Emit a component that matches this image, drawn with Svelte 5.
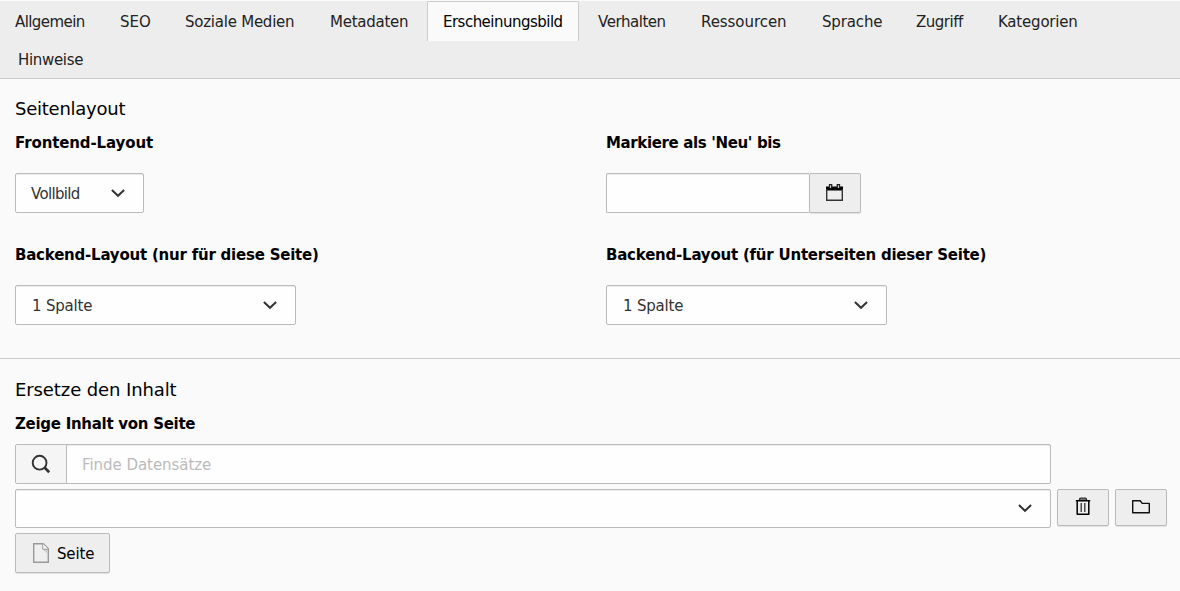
<script>
  const tabs = [
    { label: 'Allgemein', width: 105, spacing: -0.58 },
    { label: 'SEO', width: 65, spacing: 0 },
    { label: 'Soziale Medien', width: 145, spacing: -0.24 },
    { label: 'Metadaten', width: 112, spacing: -0.25 },
    { label: 'Erscheinungsbild', width: 152, spacing: -0.52, active: true },
    { label: 'Verhalten', width: 103, spacing: -0.45 },
    { label: 'Ressourcen', width: 121, spacing: -0.06 },
    { label: 'Sprache', width: 94, spacing: -0.15 },
    { label: 'Zugriff', width: 82, spacing: -0.5 },
    { label: 'Kategorien', width: 112, spacing: -0.2 },
    { label: 'Hinweise', width: 105, spacing: -0.32 }
  ];
</script>

{#snippet chevron()}
  <svg class="chevron" width="16" height="16" viewBox="0 0 16 16"><path d="M1.900 5 8 10.800 14.100 5" fill="none" stroke="#333" stroke-width="2" /></svg>
{/snippet}

<div class="page">
  <nav class="tabs">
    {#each tabs as tab}
      <a class="tab" class:active={tab.active} style="width:{tab.width}px;letter-spacing:{tab.spacing}px"><span>{tab.label}</span></a>
    {/each}
  </nav>

  <section class="layout">
    <h2>Seitenlayout</h2>
    <div class="grid">
      <div class="field">
        <span class="label wider">Frontend-Layout</span>
        <div class="select small"><span>Vollbild</span>{@render chevron()}</div>
      </div>
      <div class="field">
        <span class="label tight">Markiere als 'Neu' bis</span>
        <div class="date">
          <div class="input"></div>
          <button class="btn" aria-label="Kalender">
            <svg width="18" height="18" viewBox="0 0 18 18"><path d="M0 2.500h17v4H0z" fill="#000" /><path d="M.7 5v11.300h15.600V5" fill="none" stroke="#333" stroke-width="1.400" /><path d="M3.500 4V.7h2.200V4M11.300 4V.7h2.200V4" fill="#eee" stroke="#222" stroke-width="1.300" /></svg>
          </button>
        </div>
      </div>
      <div class="field">
        <span class="label">Backend-Layout (nur für diese Seite)</span>
        <div class="select"><span>1 Spalte</span>{@render chevron()}</div>
      </div>
      <div class="field">
        <span class="label">Backend-Layout (für Unterseiten dieser Seite)</span>
        <div class="select"><span>1 Spalte</span>{@render chevron()}</div>
      </div>
    </div>
  </section>

  <section class="content">
    <h2>Ersetze den Inhalt</h2>
    <span class="label">Zeige Inhalt von Seite</span>
    <div class="search">
      <div class="addon">
        <svg width="20" height="20" viewBox="0 0 20 20" fill="none" stroke="#333"><circle cx="8.600" cy="8.700" r="6.900" stroke-width="1.900" /><path d="m13.300 13.300 4.900 4.900" stroke-width="2.700" /></svg>
      </div>
      <div class="placeholder"><span>Finde Datensätze</span></div>
    </div>
    <div class="records">
      <div class="select wide">{@render chevron()}</div>
      <button class="btn tool" aria-label="Löschen">
        <svg width="16" height="20" viewBox="0 0 16 20" fill="none" stroke="#000"><path d="M4.500 3.500V2.200q0-1 1-1h5q1 0 1 1v1.300z" fill="#888" stroke="#333" stroke-width="1.300" /><path d="M.8 3.700h14.400" stroke-width="1.400" /><path d="M2.200 3.700v13.500h11.600V3.700" stroke-width="1.500" stroke-linejoin="round" /><path d="M6.200 6v9M9.800 6v9" stroke="#333" stroke-width="1.300" /></svg>
      </button>
      <button class="btn tool" aria-label="Ordner">
        <svg width="18" height="14" viewBox="0 0 18 14"><path d="M.7 12.700V.8h7.500l2 2.600h7.100v9.300z" fill="none" stroke="#111" stroke-width="1.400" stroke-linejoin="round" /></svg>
      </button>
    </div>
    <button class="btn page-btn">
      <svg width="16" height="20" viewBox="0 0 16 20"><path d="M.7.7h9.600l5 5v13.600H.7z" fill="#efefef" stroke="#999" stroke-width="1.400" /><path d="M9.500 6 15 11.500V6z" fill="#ccc" /><path d="M9.700.7v5.500h5.600" fill="#fafafa" stroke="#999" /></svg>
      <span>Seite</span>
    </button>
  </section>
</div>

<style>
  :global(body) { margin: 0; background: #fafafa; }
  .page { box-sizing: border-box; width: 1180px; height: 591px; overflow: hidden; font: 15px/20px "DejaVu Sans", Verdana, sans-serif; color: #000; background: #fafafa; border-top: 1px solid #fafafa; }
  .page * { box-sizing: border-box; }
  .tabs { display: flex; flex-wrap: wrap; align-content: flex-start; height: 78px; background: #ededed; border-bottom: 1px solid #ccc; }
  .tab { height: 40px; padding: 11px 0 0 15px; color: #222; white-space: nowrap; }
  .tab:nth-child(6) { margin-left: 4px; }
  .tab:last-child { margin-top: -2px; padding-left: 18px; }
  .tab.active { color: #000; background: #fafafa; border: 1px solid #ccc; border-bottom: 0; border-radius: 2px 2px 0 0; padding-top: 10px; }
  section { padding: 0 15px; }
  h2 { margin: 0; font-size: 18px; line-height: 24px; font-weight: 400; letter-spacing: -.25px; white-space: nowrap; }
  .layout { height: 280px; padding-top: 18px; border-bottom: 1px solid #ccc; }
  .grid { display: grid; grid-template-columns: 591px 1fr; grid-auto-rows: 112px; padding-top: 12px; }
  .label { display: block; font-weight: 700; letter-spacing: -.22px; white-space: nowrap; }
  .label.wider { letter-spacing: -.12px; }
  .label.tight { letter-spacing: -.36px; }
  .field .label { margin-bottom: 20px; }
  .select { display: flex; align-items: center; justify-content: space-between; width: 281px; height: 40px; padding: 0 17px 0 16px; color: #333; letter-spacing: -.2px; background: #fefefe; border: 1px solid #bbb; border-radius: 2px; box-shadow: inset 0 1px 1px rgba(0,0,0,.075); }
  .select span { padding-top: 2px; }
  .select.small { width: 129px; padding-left: 15px; letter-spacing: -.68px; }
  .chevron { flex: none; }
  .date { display: flex; width: 255px; height: 40px; }
  .input { flex: 1; background: #fefefe; border: 1px solid #bbb; border-right: 0; border-radius: 2px 0 0 2px; box-shadow: inset 0 1px 1px rgba(0,0,0,.075); }
  .btn { display: flex; align-items: center; justify-content: center; width: 52px; padding: 0; color: #000; font: inherit; background: #eee; border: 1px solid #bbb; border-radius: 2px; box-shadow: 0 1px 1px rgba(0,0,0,.1); }
  .content { padding-top: 19px; }
  .content h2 { letter-spacing: -.1px; }
  .content > .label { margin-top: 12px; letter-spacing: -.28px; }
  .search { display: flex; width: 1036px; height: 40px; margin-top: 10px; background: #fefefe; border: 1px solid #bbb; border-radius: 2px; }
  .addon { display: flex; align-items: center; justify-content: center; width: 51px; background: #f5f5f5; border-right: 1px solid #bbb; }
  .placeholder { display: flex; flex: 1; align-items: center; padding: 2px 0 0 15px; color: #bbb; letter-spacing: -.05px; box-shadow: inset 0 1px 1px rgba(0,0,0,.075); }
  .records { display: flex; gap: 6px; margin-top: 5px; }
  .wide { flex: none; width: 1036px; height: 39px; justify-content: flex-end; padding-bottom: 1px; }
  .tool { flex: none; height: 37px; padding-bottom: 1px; }
  .page-btn { width: 95px; height: 40px; margin-top: 5px; gap: 8px; justify-content: flex-start; padding-left: 17px; letter-spacing: -.15px; }
  .page-btn span { padding-top: 2px; }
</style>
